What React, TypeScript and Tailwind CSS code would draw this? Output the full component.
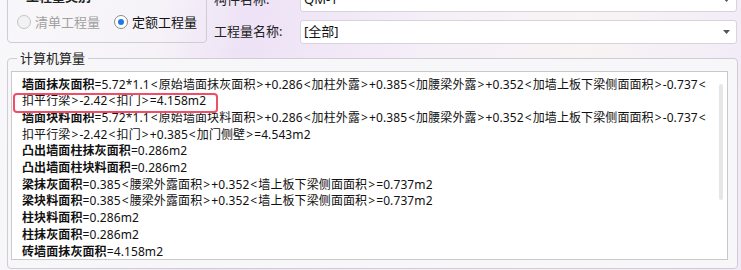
import React from 'react';

const FONT = '"Noto Sans", "Noto Sans CJK SC", sans-serif';

type Row = { b?: string; t: string };

// each entry is one visual line of the text box
const lines: Row[] = [
  { b: '墙面抹灰面积', t: '=5.72*1.1<原始墙面抹灰面积>+0.286<加柱外露>+0.385<加腰梁外露>+0.352<加墙上板下梁侧面面积>-0.737<' },
  { t: '扣平行梁>-2.42<扣门>=4.158m2' },
  { b: '墙面块料面积', t: '=5.72*1.1<原始墙面块料面积>+0.286<加柱外露>+0.385<加腰梁外露>+0.352<加墙上板下梁侧面面积>-0.737<' },
  { t: '扣平行梁>-2.42<扣门>+0.385<加门侧壁>=4.543m2' },
  { b: '凸出墙面柱抹灰面积', t: '=0.286m2' },
  { b: '凸出墙面柱块料面积', t: '=0.286m2' },
  { b: '梁抹灰面积', t: '=0.385<腰梁外露面积>+0.352<墙上板下梁侧面面积>=0.737m2' },
  { b: '梁块料面积', t: '=0.385<腰梁外露面积>+0.352<墙上板下梁侧面面积>=0.737m2' },
  { b: '柱块料面积', t: '=0.286m2' },
  { b: '柱抹灰面积', t: '=0.286m2' },
  { b: '砖墙面抹灰面积', t: '=4.158m2' },
];

// angle brackets in the original font carry extra side bearing
function Formula({ text }: { text: string }) {
  const parts = text.split(/([<>])/);
  return (
    <>
      {parts.map((p, i) =>
        p === '<' || p === '>' ? (
          <span key={i} className="px-[1px]">
            {p}
          </span>
        ) : (
          <React.Fragment key={i}>{p}</React.Fragment>
        )
      )}
    </>
  );
}

function Radio({ label, checked }: { label: string; checked?: boolean }) {
  return (
    <label className="flex items-center gap-[4px]">
      <span
        className={`w-[14px] h-[14px] rounded-full border flex items-center justify-center ${
          checked ? 'border-[#8a8a8a] bg-white' : 'border-[#c4c4c4] bg-[#f2f2f2]'
        }`}
      >
        {checked && <span className="w-[6px] h-[6px] rounded-full bg-[#1f7ae0]" />}
      </span>
      <span className={checked ? 'text-[#111]' : 'text-[#a0a0a0]'}>{label}</span>
    </label>
  );
}

function Select({ value }: { value: string }) {
  return (
    <div className="flex-1 h-[24px] bg-white border border-[#d6d3da] rounded-[3px] flex items-center pl-[3px] pr-[6px]">
      <span className="flex-1 text-[#111]">{value}</span>
      <svg width="7" height="4" viewBox="0 0 7 4">
        <path d="M0 0h7L3.5 4z" fill="#555" />
      </svg>
    </div>
  );
}

export default function App() {
  return (
    <div
      className="w-[741px] h-[270px] overflow-hidden text-[13px] text-[#222] bg-[linear-gradient(100deg,#f8f7f9_0%,#f6f3f8_20%,#eee2f6_32%,#f5eff8_55%,#f8f4f3_75%,#f1eaf9_100%)]"
      style={{ fontFamily: FONT }}
    >
      <div className="-mt-[13px] flex flex-col">
        {/* top filter area */}
        <div className="flex pr-[4px]">
          <fieldset className="ml-[7px] w-[200px] h-[56px] border border-[#cfcdd3] rounded-[4px] px-[9px] pb-[10px] flex flex-col justify-end">
            <legend className="ml-[6px] px-[3px] font-bold text-[#222]">工程量类别</legend>
            <div className="flex items-center gap-[14px]">
              <Radio label="清单工程量" />
              <Radio label="定额工程量" checked />
            </div>
          </fieldset>
          <div className="flex-1 ml-[7px] flex flex-col gap-[8px] pt-[1px]">
            <div className="flex items-center">
              <span className="w-[86px] text-[#222]">构件名称:</span>
              <Select value="QM-1" />
            </div>
            <div className="flex items-center">
              <span className="w-[86px] text-[#222]">工程量名称:</span>
              <Select value="[全部]" />
            </div>
          </div>
        </div>

        {/* calculation result */}
        <fieldset className="mt-[5px] ml-[7px] mr-[3px] h-[220px] border border-[#cfcdd3] rounded-[4px] bg-[#f7f6f8] px-[3px] pt-[2px]">
          <legend className="ml-[6px] px-[3px] text-[#222]">计算机算量</legend>
          <div className="relative h-[189px] mr-[6px] border border-[#c9c9c9] bg-white overflow-hidden pl-[10px] pt-[5px] text-[12px] leading-[16.7px] tracking-[0.1px] text-[#111]">
            {lines.map((l, i) => (
              <div key={i} className="whitespace-nowrap">
                {l.b && <span className="font-bold">{l.b}</span>}
                <Formula text={l.t} />
              </div>
            ))}
            {/* scrollbar thumb */}
            <div className="absolute right-[4px] top-[12px] w-[4px] h-[116px] rounded-full bg-[#e6e6e6]" />
            {/* highlight box */}
            <div className="absolute left-[1px] top-[21px] w-[205px] h-[20px] border-2 border-[#f04d66] rounded-[4px]" />
          </div>
        </fieldset>
      </div>
    </div>
  );
}
